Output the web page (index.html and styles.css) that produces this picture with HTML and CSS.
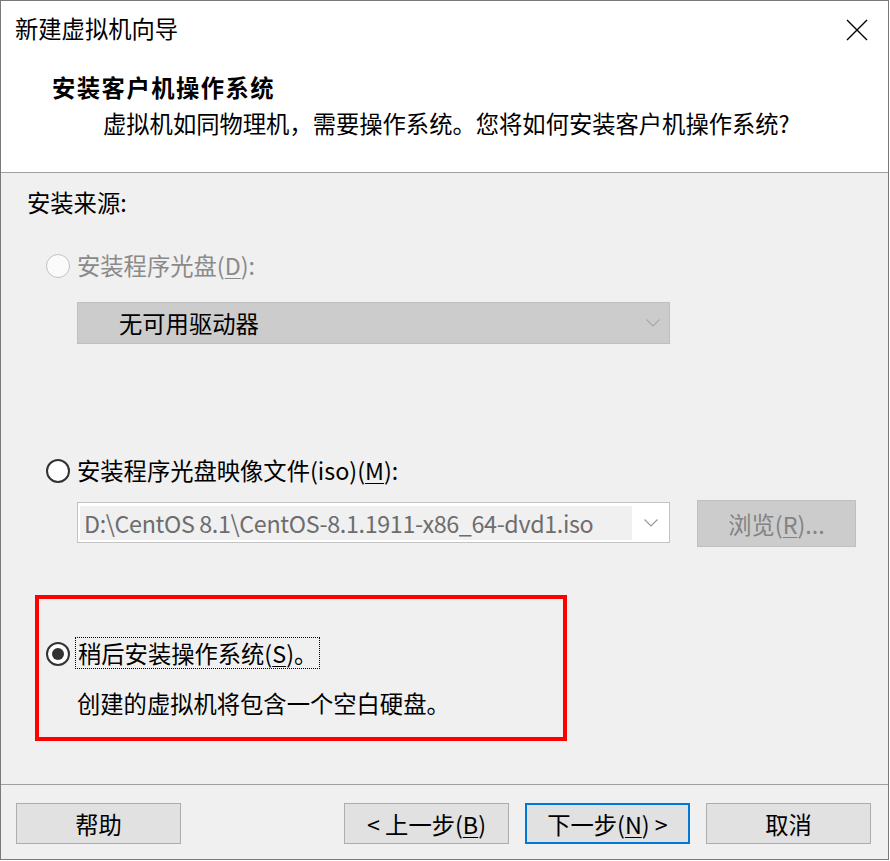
FILE: index.html
```html
<!DOCTYPE html>
<html lang="zh-CN">
<head>
<meta charset="utf-8">
<title>新建虚拟机向导</title>
<link rel="stylesheet" href="styles.css">
</head>
<body>
<div class="window">
  <div class="titlebar">
    <span class="title">新建虚拟机向导</span>
    <svg class="close" width="22" height="22" viewBox="0 0 22 22"><path d="M1 1 L21 21 M21 1 L1 21" stroke="#000" stroke-width="1.4" fill="none"/></svg>
  </div>
  <div class="header">
    <div class="h-title">安装客户机操作系统</div>
    <div class="h-sub">虚拟机如同物理机，需要操作系统。您将如何安装客户机操作系统?</div>
  </div>
  <div class="content">
    <div class="label">安装来源:</div>
    <div class="radio-row disabled">
      <span class="radio"></span>
      <span class="radio-label">安装程序光盘(<u>D</u>):</span>
    </div>
    <div class="combo">
      <span class="combo-text">无可用驱动器</span>
      <svg class="chev" width="14" height="8" viewBox="0 0 14 8"><path d="M0.5 0.5 L7 7 L13.5 0.5" stroke="#a8a8a8" stroke-width="1.2" fill="none"/></svg>
    </div>
    <div class="radio-row second">
      <span class="radio"></span>
      <span class="radio-label">安装程序光盘映像文件(iso)(<u>M</u>):</span>
    </div>
    <div class="iso-row">
      <div class="combo2">
        <span class="field">D:\CentOS 8.1\CentOS-8.1.1911-x86_64-dvd1.iso</span>
        <svg class="chev" width="14" height="8" viewBox="0 0 14 8"><path d="M0.5 0.5 L7 7 L13.5 0.5" stroke="#9a9a9a" stroke-width="1.2" fill="none"/></svg>
      </div>
      <div class="browse">浏览(<u>R</u>)...</div>
    </div>
    <div class="redbox">
      <div class="radio-row inbox">
        <span class="radio checked"><span class="dot"></span></span>
        <span class="focus-label">稍后安装操作系统(<u>S</u>)。</span>
      </div>
      <div class="desc">创建的虚拟机将包含一个空白硬盘。</div>
    </div>
  </div>
  <div class="footer">
    <div class="btn">帮助</div>
    <div class="btn-group">
      <div class="btn">&lt; 上一步(<u>B</u>)</div>
      <div class="btn default">下一步(<u>N</u>) &gt;</div>
      <div class="btn">取消</div>
    </div>
  </div>
</div>
</body>
</html>
```
FILE: styles.css
```css
html, body {
  margin: 0;
  padding: 0;
  background: #ffffff;
}
body {
  font-family: "Noto Sans CJK SC", "Noto Sans", sans-serif;
  font-size: 23.3px;
  color: #000;
}
u {
  text-decoration: underline;
  text-underline-offset: 3px;
  text-decoration-thickness: 1px;
}
.window {
  box-sizing: border-box;
  width: 889px;
  height: 860px;
  border: 1px solid #7a7a7a;
  background: #f0f0f0;
  display: flex;
  flex-direction: column;
}
.titlebar {
  box-sizing: border-box;
  height: 59px;
  padding: 11px 0 0 14px;
  background: #fff;
  display: flex;
  justify-content: space-between;
  align-items: flex-start;
  line-height: 32px;
}
.close {
  margin: 7px 20px 0 0;
}
.header {
  background: #fff;
  padding: 9px 0 31px 0;
  border-bottom: 1px solid #a0a0a0;
  line-height: 36px;
}
.h-title {
  padding-left: 51px;
  font-weight: bold;
  letter-spacing: 1.5px;
}
.h-sub {
  padding-left: 102px;
}
.content {
  flex: 1;
  padding-left: 26px;
}
.label {
  margin-top: 13px;
  line-height: 32px;
}
.radio-row {
  display: flex;
  align-items: center;
  height: 32px;
  line-height: 32px;
  margin-left: 19px;
  margin-top: 31px;
}
.radio-row.second {
  margin-top: 110px;
}
.radio-row.inbox {
  margin: 0;
}
.radio {
  box-sizing: border-box;
  width: 24px;
  height: 24px;
  border-radius: 50%;
  border: 2px solid #333;
  background: #fff;
  margin-top: 2px;
  display: flex;
  align-items: center;
  justify-content: center;
  flex: none;
}
.disabled .radio {
  border: 1.5px solid #c2c2c2;
  background: #fbfbfb;
}
.disabled .radio-label {
  color: #8a8a8a;
}
.radio-label {
  margin-left: 7px;
  white-space: nowrap;
}
.dot {
  width: 12px;
  height: 12px;
  border-radius: 50%;
  background: #333;
}
.combo {
  box-sizing: border-box;
  margin: 21px 0 0 50px;
  width: 593px;
  height: 42px;
  border: 1px solid #bfbfbf;
  background: #cccccc;
  display: flex;
  align-items: center;
  padding-left: 41px;
}
.chev {
  margin-left: auto;
  margin-right: 9px;
  flex: none;
}
.iso-row {
  display: flex;
  align-items: flex-start;
  height: 47px;
  margin: 14px 0 0 50px;
}
.combo2 {
  box-sizing: border-box;
  margin-top: 2px;
  width: 593px;
  height: 41px;
  border: 1px solid #c3c3c3;
  background: #fff;
  padding: 2px;
  display: flex;
  align-items: center;
}
.field {
  box-sizing: border-box;
  width: 552px;
  height: 34px;
  line-height: 34px;
  background: #f0f0f0;
  color: #6d6d6d;
  padding-left: 4px;
  letter-spacing: -0.35px;
  white-space: nowrap;
  overflow: hidden;
}
.browse {
  box-sizing: border-box;
  margin-left: 27px;
  width: 159px;
  height: 47px;
  border: 1px solid #bfbfbf;
  background: #cccccc;
  color: #838383;
  display: flex;
  align-items: center;
  justify-content: center;
}
.redbox {
  box-sizing: border-box;
  margin: 48px 0 0 8px;
  width: 532px;
  border: 4px solid #ff0000;
  padding: 38px 0 18px 7px;
}
.focus-label {
  box-sizing: border-box;
  margin-left: 5px;
  height: 32px;
  line-height: 30px;
  border: 1px dotted #000;
  padding: 0 2px;
  white-space: nowrap;
}
.desc {
  margin: 18px 0 0 31px;
  line-height: 32px;
}
.footer {
  border-top: 1px solid #a0a0a0;
  padding: 18px 17px 15px 15px;
  display: flex;
}
.btn-group {
  margin-left: auto;
  display: flex;
  gap: 16px;
}
.btn {
  box-sizing: border-box;
  width: 165px;
  height: 41px;
  border: 1px solid #adadad;
  background: #e1e1e1;
  display: flex;
  align-items: center;
  justify-content: center;
  white-space: nowrap;
}
.btn.default {
  border: 2px solid #0078d7;
}
```
